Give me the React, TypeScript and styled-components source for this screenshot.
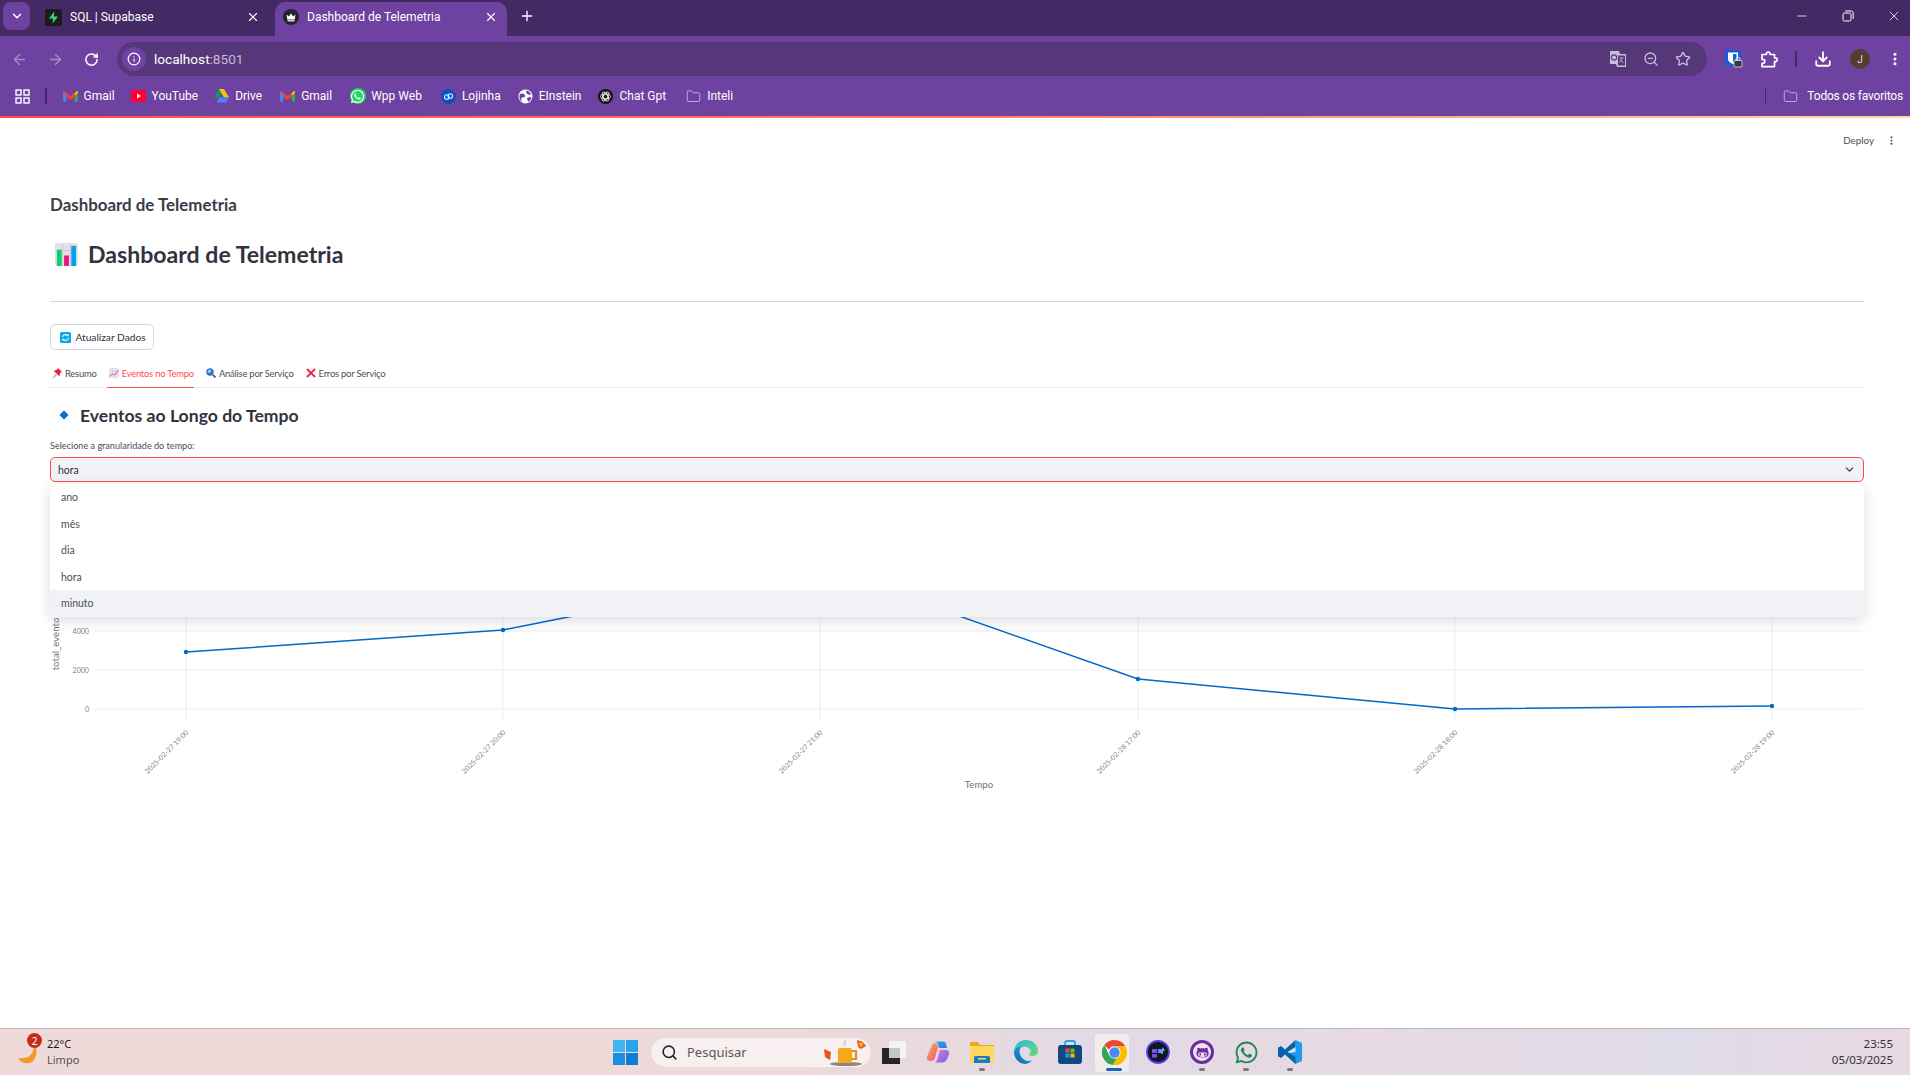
import React from "react";
import styled, { createGlobalStyle } from "styled-components";
import {
  ArrowLeft,
  ArrowRight,
  ChevronDown,
  Download,
  EllipsisVertical,
  Folder,
  Info,
  Minus,
  Plus,
  RotateCw,
  Search,
  Star,
  X,
  ZoomOut,
} from "lucide-react";
import { FaGithubAlt, FaWhatsapp } from "react-icons/fa";

const UI_FONT = `Roboto, "Noto Sans", sans-serif`;
const PAGE_FONT = `Lato, "Noto Sans", sans-serif`;
const SHELL_FONT = `"Noto Sans", "Open Sans", sans-serif`;

const GlobalStyle = createGlobalStyle`
  html, body {
    margin: 0;
    padding: 0;
    background: #ffffff;
    overflow: hidden;
  }
  * {
    box-sizing: border-box;
  }
`;

const Root = styled.div`
  width: 1910px;
  height: 1075px;
  display: flex;
  flex-direction: column;
  overflow: hidden;
  font-family: ${UI_FONT};
`;

/* ---------- browser chrome ---------- */

const TabStrip = styled.div`
  height: 36px;
  flex: none;
  display: flex;
  align-items: flex-end;
  background: #442a64;
  padding-left: 3px;
  position: relative;
`;

const TabSearch = styled.div`
  width: 27px;
  height: 28px;
  margin-bottom: 6px;
  border-radius: 8px;
  background: #6e42a0;
  color: #fff;
  display: flex;
  align-items: center;
  justify-content: center;
`;

const Tab = styled.div<{ $active?: boolean; $width: number }>`
  width: ${(p) => p.$width}px;
  height: 34px;
  display: flex;
  align-items: center;
  padding: 0 ${(p) => (p.$active ? 9 : 15)}px 4px 8px;
  gap: 8px;
  color: #fff;
  font-size: 12px;
  border-radius: 10px 10px 0 0;
  background: ${(p) => (p.$active ? "#6e42a0" : "transparent")};
`;

const FirstTabSpacer = styled.div`
  width: 7px;
`;

const TabTitle = styled.span`
  flex: 1;
  white-space: nowrap;
  overflow: hidden;
`;

const NewTab = styled.div`
  margin: 0 0 5px 12px;
  height: 30px;
  display: flex;
  align-items: center;
  color: #fff;
`;

const WindowControls = styled.div`
  margin: 0 -7px 0 auto;
  align-self: flex-start;
  height: 32px;
  display: flex;
  align-items: center;
  color: #fff;
`;

const WindowButton = styled.div`
  width: 46px;
  height: 32px;
  display: flex;
  align-items: center;
  justify-content: center;
`;

const Toolbar = styled.div`
  height: 44px;
  flex: none;
  background: #6e42a0;
  display: flex;
  align-items: flex-start;
  padding-top: 6px;
`;

const NavGroup = styled.div`
  width: 117px;
  height: 34px;
  display: flex;
  padding-left: 1px;
`;

const NavButton = styled.div<{ $dim?: boolean }>`
  width: 36px;
  height: 34px;
  display: flex;
  align-items: center;
  justify-content: center;
  color: ${(p) => (p.$dim ? "#a38dc1" : "#ffffff")};
`;

const Omnibox = styled.div`
  width: 1590px;
  height: 34px;
  border-radius: 17px;
  background: #56387a;
  display: flex;
  align-items: center;
  padding: 0 16px 0 5px;
`;

const InfoBadge = styled.div`
  width: 24px;
  height: 24px;
  border-radius: 50%;
  background: #6e42a0;
  color: #fff;
  display: flex;
  align-items: center;
  justify-content: center;
  margin-right: 8px;
`;

const Url = styled.span`
  font-size: 13.6px;
  color: #fff;
  flex: 1;
`;

const UrlPort = styled.span`
  color: #c6b8d8;
`;

const OmniIcons = styled.div`
  display: flex;
  align-items: center;
  gap: 16px;
  color: #c9bdd9;
`;

const ToolbarRight = styled.div`
  flex: 1;
  height: 34px;
  display: flex;
  align-items: center;
  padding-left: 18px;
  color: #fff;
`;

const PuzzleSlot = styled.div`
  width: 36px;
  height: 34px;
  margin-left: 8px;
  display: flex;
  align-items: center;
  justify-content: center;
`;

const ToolDivider = styled.div`
  width: 2px;
  height: 16px;
  margin: 0 17px 0 8px;
  background: #432a63;
`;

const Avatar = styled.div`
  width: 20px;
  height: 20px;
  margin: 0 17px 0 18px;
  border-radius: 50%;
  background: #573c33;
  color: #e8ddd8;
  font-size: 10px;
  display: flex;
  align-items: center;
  justify-content: center;
`;

const BookmarkBar = styled.div`
  height: 36px;
  flex: none;
  background: #6e42a0;
  display: flex;
  align-items: center;
  padding: 0 0 4px 15px;
  color: #fff;
  font-size: 12px;
`;

const BookmarkDivider = styled.div<{ $right?: boolean }>`
  width: 1.5px;
  height: 16px;
  background: #432a63;
  margin: ${(p) => (p.$right ? "0 17px 0 0" : "0 16px 0 15px")};
`;

const Bookmark = styled.div<{ $gap: number; $iconGap?: number }>`
  display: flex;
  align-items: center;
  gap: ${(p) => p.$iconGap ?? 6}px;
  margin-right: ${(p) => p.$gap}px;
  white-space: nowrap;
`;

const BookmarkIcon = styled.span`
  width: 15px;
  height: 16px;
  display: flex;
  align-items: center;
  justify-content: center;
  color: #c9bdd9;
`;

const WppBookmark = styled.span`
  width: 16px;
  height: 16px;
  flex: none;
  border-radius: 50%;
  background: #25d366;
  display: flex;
  align-items: center;
  justify-content: center;
`;

const BookmarkEnd = styled.div`
  margin-left: auto;
  display: flex;
  align-items: center;
  padding-right: 7px;
  letter-spacing: -0.2px;
`;

const AccentLine = styled.div`
  height: 2px;
  flex: none;
  background: linear-gradient(90deg, #ff4b4b 0%, #ff7a5f 50%, #ffd9a0 100%);
`;

/* ---------- streamlit page ---------- */

const Page = styled.main`
  flex: 1;
  min-height: 0;
  background: #fff;
  color: #31333f;
  font-family: ${PAGE_FONT};
  padding: 0 46px 0 50px;
  overflow: hidden;
`;

const Header = styled.div`
  height: 44px;
  margin-right: -46px;
  display: flex;
  align-items: center;
  justify-content: flex-end;
  padding-right: 13px;
  font-size: 9.8px;
  color: #4b4e5b;
  gap: 12px;
`;

const Subheading = styled.h3`
  margin: 28px 0 0;
  height: 30px;
  line-height: 30px;
  font-size: 16.9px;
  font-weight: 700;
  color: #3a3c48;
`;

const Title = styled.h1`
  margin: 14px 0 0;
  height: 40px;
  display: flex;
  align-items: center;
  gap: 10px;
  padding-left: 5px;
  font-size: 23.1px;
  font-weight: 700;
  color: #31333f;
`;

const Rule = styled.hr`
  margin: 27px 0 0;
  border: 0;
  height: 1px;
  background: #d6d7da;
`;

const RefreshButton = styled.button`
  margin-top: 22px;
  width: 104px;
  height: 26px;
  display: flex;
  align-items: center;
  justify-content: center;
  gap: 4px;
  padding: 0 0 0 2px;
  background: #fff;
  border: 1px solid #d5d6da;
  border-radius: 5px;
  font-family: inherit;
  font-size: 10.2px;
  color: #31333f;
`;

const Tabs = styled.div`
  margin-top: 13px;
  height: 25px;
  display: flex;
  gap: 10px;
  border-bottom: 1px solid #eceef1;
`;

const TabItem = styled.div<{ $active?: boolean }>`
  height: 25px;
  display: flex;
  align-items: flex-start;
  gap: 3px;
  padding: 5px 0 0 2px;
  font-size: 9.4px;
  letter-spacing: -0.2px;
  line-height: 12px;
  white-space: nowrap;
  color: ${(p) => (p.$active ? "#ff4b4b" : "#4b4e5b")};
  border-bottom: ${(p) => (p.$active ? "1px solid #ff4b4b" : "none")};
`;

const SectionTitle = styled.h2`
  margin: 15px 0 0;
  height: 24px;
  display: flex;
  align-items: center;
  gap: 11px;
  padding-left: 9px;
  font-size: 17.6px;
  font-weight: 700;
  color: #31333f;
`;

const FieldLabel = styled.label`
  display: block;
  margin-top: 12px;
  height: 14px;
  line-height: 14px;
  font-size: 9.1px;
  color: #4b4e5b;
`;

const SelectWrap = styled.div`
  position: relative;
  margin-top: 4px;
`;

const SelectBox = styled.div`
  height: 25px;
  display: flex;
  align-items: center;
  justify-content: space-between;
  padding: 0 7px 0 7px;
  background: #f0f2f6;
  border: 1px solid #ff4b4b;
  border-radius: 5px;
  font-size: 10.5px;
  color: #31333f;
`;

const Menu = styled.ul`
  position: absolute;
  top: 27px;
  left: 0;
  right: 0;
  margin: 0;
  padding: 0;
  list-style: none;
  background: #fff;
  border-radius: 6px;
  overflow: hidden;
  box-shadow: 0 4px 14px rgba(40, 45, 60, 0.16);
  z-index: 2;
`;

const MenuItem = styled.li<{ $hover?: boolean }>`
  height: 26.6px;
  line-height: 26.6px;
  padding-left: 11px;
  font-size: 10.5px;
  color: #4b4e5b;
  background: ${(p) => (p.$hover ? "#f0f2f6" : "#fff")};
`;

const ChartSvg = styled.svg`
  display: block;
  margin-top: 1px;
  width: 1813px;
  height: 320px;
`;

const TickText = styled.text`
  font-family: ${PAGE_FONT};
  font-size: 7.1px;
  fill: #7f8290;
`;

const AxisTitle = styled.text`
  font-family: ${PAGE_FONT};
  font-size: 9.6px;
  fill: #6f7385;
`;

/* ---------- taskbar ---------- */

const Taskbar = styled.footer`
  height: 47px;
  flex: none;
  display: flex;
  align-items: center;
  border-top: 1px solid #bdb7b7;
  background: linear-gradient(90deg, #eedbd9 0%, #ecd9d8 42%, #e2dae6 58%, #e7dae2 72%, #dfdbe8 88%, #e8d9e2 100%);
  color: #1d1d1d;
  font-family: ${SHELL_FONT};
`;

const Weather = styled.div`
  width: 613px;
  height: 46px;
  flex: none;
  display: flex;
  align-items: center;
  padding-left: 16px;
  gap: 4px;
  position: relative;
`;

const WeatherBadge = styled.span`
  position: absolute;
  left: 27px;
  top: 4px;
  width: 15px;
  height: 15px;
  border-radius: 50%;
  background: #c42b1c;
  color: #fff;
  font-size: 10px;
  display: flex;
  align-items: center;
  justify-content: center;
`;

const WeatherText = styled.div`
  display: flex;
  flex-direction: column;
  font-size: 11px;
  line-height: 16px;
  padding-left: 1px;
`;

const WeatherSub = styled.span`
  color: #565050;
`;

const StartLogo = styled.svg`
  width: 25px;
  height: 25px;
  flex: none;
`;

const SearchPill = styled.div`
  margin-left: 12px;
  width: 222px;
  height: 31px;
  border-radius: 16px;
  background: #f7eff0;
  border: 1px solid #e3dbdc;
  display: flex;
  align-items: center;
  padding-left: 10px;
  gap: 9px;
  font-size: 13px;
  color: #5d5757;
  position: relative;
`;

const SearchArt = styled.svg`
  position: absolute;
  right: 2px;
  top: -1px;
  width: 48px;
  height: 30px;
`;

const TrayIcons = styled.div`
  display: flex;
  align-items: center;
`;

const TrayItem = styled.div<{ $active?: boolean }>`
  width: 44px;
  height: 46px;
  display: flex;
  align-items: center;
  justify-content: center;
  position: relative;
  &::before {
    content: "";
    position: absolute;
    left: 3px;
    right: 7px;
    top: 5px;
    bottom: 3px;
    border-radius: 4px;
    background: ${(p) => (p.$active ? "#f4eceb" : "transparent")};
  }
  > * {
    position: relative;
  }
`;

const RunDot = styled.span<{ $active?: boolean }>`
  && {
    position: absolute;
  }
  bottom: 4px;
  left: 50%;
  transform: translateX(-50%);
  width: ${(p) => (p.$active ? "16px" : "6px")};
  height: 3px;
  border-radius: 2px;
  background: ${(p) => (p.$active ? "#0f6cbd" : "#7b7678")};
`;

const GithubRing = styled.span`
  width: 24px;
  height: 24px;
  border-radius: 50%;
  border: 3px solid #6a2d9f;
  background: #efe3ee;
  color: #6a2d9f;
  display: flex;
  align-items: center;
  justify-content: center;
`;

const Clock = styled.div`
  margin-left: auto;
  padding-right: 17px;
  text-align: right;
  font-size: 11.5px;
  line-height: 16px;
  color: #333;
`;

/* ---------- drawn icons ---------- */

const SupabaseIcon = () => (
  <svg width="17" height="17" viewBox="0 0 17 17">
    <rect width="17" height="17" rx="2" fill="#1c1c1c" />
    <path d="M9.4 2.5 4 9.6h4.2l-.6 5 5.4-7.2H8.8z" fill="#3ecf8e" />
  </svg>
);

const StreamlitIcon = () => (
  <svg width="16" height="16" viewBox="0 0 16 16">
    <circle cx="8" cy="8" r="8" fill="#24222b" />
    <path d="M3.5 5.5 5.8 7.4 8 4.4l2.2 3 2.3-1.9-.8 5H4.3z" fill="#fff" />
    <rect x="4.5" y="11.2" width="7" height="1.2" fill="#fff" />
  </svg>
);

const RestoreIcon = () => (
  <svg width="12" height="12" viewBox="0 0 12 12" fill="none" stroke="#fff" strokeWidth="1">
    <rect x="1" y="3" width="8" height="8" rx="1.5" />
    <path d="M3.2 1h6a2 2 0 0 1 2 2v6" />
  </svg>
);

const TranslateIcon = () => (
  <svg width="18" height="18" viewBox="0 0 18 18">
    <path d="M1 1h9l1 3h6v13H8l-1-3H1z" fill="#c9bdd9" />
    <rect x="8.5" y="5" width="8" height="11" fill="#56387a" stroke="#c9bdd9" />
    <circle cx="5" cy="7.5" r="2.6" fill="none" stroke="#56387a" strokeWidth="1.2" />
    <path d="M10.5 8h4M12.5 8c0 2-1 3.5-2 4.5M11.5 10c.6 1 1.6 2 3 2.5" fill="none" stroke="#c9bdd9" strokeWidth=".9" />
  </svg>
);

const BitwardenIcon = () => (
  <svg width="18" height="18" viewBox="0 0 18 18">
    <rect width="16" height="16" fill="#175ddc" />
    <path d="M3 2.5h10V9c0 2.5-2.5 4-5 5-2.5-1-5-2.5-5-5z" fill="#fff" />
    <path d="M8 4h3.5v5c0 1.5-1.8 2.600-3.5 3.300z" fill="#175ddc" />
    <rect x="9" y="10.5" width="8" height="6.5" rx="1" fill="#3a3a3a" stroke="#ddd" strokeWidth=".8" />
    <path d="M11 10.5V9.300a2 2 0 0 1 4 0v1.200" fill="none" stroke="#ddd" />
  </svg>
);

const PuzzleIcon = () => (
  <svg width="17" height="17" viewBox="0 0 17 17" fill="none" stroke="#fff" strokeWidth="1.7" strokeLinejoin="round">
    <path d="M1 3.5h4.300V3a1.900 1.900 0 0 1 3.800 0v.5h4.400v3.300h.7a1.900 1.900 0 0 1 0 3.800h-.7v5H1v-3.300h.8a2 2 0 0 0 0-4H1z" />
  </svg>
);

const GmailIcon = () => (
  <svg width="15" height="12" viewBox="0 0 15 12">
    <path d="M0 2.5 1 .8 7.5 6 14 .8l1 1.700V5L7.500 10 0 5z" fill="#ea4335" />
    <path d="M0 2v8.800c0 .5.400 1 1 1h2.300V4.500z" fill="#4285f4" />
    <path d="M15 2v8.800c0 .5-.4 1-1 1h-2.300V4.500z" fill="#34a853" />
    <path d="M11.700 3 15 .8V3l-3.300 2.700z" fill="#fbbc04" />
  </svg>
);

const YouTubeIcon = () => (
  <svg width="15" height="12" viewBox="0 0 15 12">
    <rect width="15" height="12" rx="3" fill="#ff0033" />
    <path d="M6 3.5v5L10 6z" fill="#fff" />
  </svg>
);

const DriveIcon = () => (
  <svg width="15" height="14" viewBox="0 0 15 14">
    <path d="M5 0h5L5 8.500H0z" fill="#0f9d58" />
    <path d="M5 0h5l5 8.500h-5z" fill="#ffc107" />
    <path d="M2.500 13.500 5 8.500h10l-2.500 5z" fill="#4285f4" />
  </svg>
);

const LojinhaIcon = () => (
  <svg width="15" height="15" viewBox="0 0 15 15">
    <circle cx="7.5" cy="7.5" r="7.5" fill="#0b4fc4" />
    <circle cx="5.8" cy="8" r="2.3" fill="none" stroke="#dfe9ff" strokeWidth="1.1" />
    <circle cx="9.3" cy="7" r="2.3" fill="none" stroke="#dfe9ff" strokeWidth="1.1" />
  </svg>
);

const EinsteinIcon = () => (
  <svg width="15" height="15" viewBox="0 0 15 15">
    <circle cx="7.5" cy="7.5" r="7" fill="#fff" />
    <path d="M2 5c2-1 4-.5 5 1s-1 3-2.500 2.500S3 10 4 13C1.500 11.500.8 8 2 5zM8.500 1.500c2 .5 4 2 4.500 4-1.500.5-3 .3-4-.8s-1-2-.5-3.200zM9.500 8.500c1.500-.5 3-.5 4 0-.3 2-1.500 3.500-3 4.300-1.200-1.500-1.800-3-1-4.300z" fill="#6e42a0" />
  </svg>
);

const ChatGptIcon = () => (
  <svg width="15" height="15" viewBox="0 0 15 15">
    <circle cx="7.5" cy="7.5" r="7.5" fill="#111" />
    <g fill="none" stroke="#e6e6e6" strokeWidth=".9">
      <circle cx="7.5" cy="7.5" r="2.2" />
      <ellipse cx="7.5" cy="7.5" rx="5" ry="2.6" />
      <ellipse cx="7.5" cy="7.5" rx="5" ry="2.6" transform="rotate(60 7.5 7.5)" />
      <ellipse cx="7.5" cy="7.5" rx="5" ry="2.6" transform="rotate(120 7.5 7.5)" />
    </g>
  </svg>
);

const PinEmoji = () => (
  <svg width="10" height="11" viewBox="0 0 10 11">
    <path d="M6 0l4 4-1.500.6L7.300 8.200 1.800 2.900 5.400 1.600z" fill="#e5243b" />
    <path d="M3.300 5.800 0 11l5-3.600z" fill="#b7b7b7" />
  </svg>
);

const ChartEmoji = ({ size }: { size: number }) => (
  <svg width={size} height={size} viewBox="0 0 24 24">
    <rect width="24" height="24" rx="2" fill="#e4dfe9" />
    <path d="M8 0v24M16 0v24M0 8h24M0 16h24" stroke="#cfc8d8" strokeWidth="1" />
    <rect x="2" y="7" width="5" height="17" fill="#0ccf6c" />
    <rect x="9.5" y="13" width="5" height="11" fill="#f0127e" />
    <rect x="17" y="3" width="5" height="21" fill="#00a2e8" />
  </svg>
);

const TrendEmoji = () => (
  <svg width="10" height="10" viewBox="0 0 10 10">
    <rect width="10" height="10" fill="#e9e4ee" />
    <path d="M3.300 0v10M6.600 0v10M0 3.300h10M0 6.600h10" stroke="#d2cbdc" strokeWidth=".5" />
    <path d="M.5 8.500 3.500 6l2 1L9.500 2" fill="none" stroke="#e55b7e" strokeWidth="1" />
  </svg>
);

const LensEmoji = () => (
  <svg width="10" height="10" viewBox="0 0 10 10">
    <circle cx="4" cy="4" r="3.7" fill="#2a74c9" />
    <circle cx="3.4" cy="3.3" r="1.7" fill="#9cc9f2" />
    <path d="M6.800 6.800 9.500 9.500" stroke="#4a4a5a" strokeWidth="1.6" />
  </svg>
);

const CrossEmoji = () => (
  <svg width="10" height="10" viewBox="0 0 10 10">
    <path d="M1 1l8 8M9 1 1 9" stroke="#f02849" strokeWidth="1.9" />
  </svg>
);

const RefreshEmoji = () => (
  <svg width="11" height="11" viewBox="0 0 11 11">
    <rect width="11" height="11" rx="1.5" fill="#0ea5e9" />
    <path d="M2.500 5a3 3 0 0 1 5.200-1.300M8.500 6a3 3 0 0 1-5.200 1.300" fill="none" stroke="#fff" strokeWidth="1.1" />
    <path d="M8.600 2v2.300H6.400M2.400 9V6.700h2.200" fill="#fff" />
  </svg>
);

const Diamond = () => (
  <svg width="10" height="10" viewBox="0 0 10 10">
    <path d="M5 .5 9.500 5 5 9.500.5 5z" fill="#0a6cc4" />
  </svg>
);

const WeatherIcon = () => (
  <svg width="26" height="26" viewBox="0 0 26 26">
    <path d="M18 4c.5 5-.5 9-3.500 12-2.800 2.700-7 3.500-12.500 3 2.500 4.500 7 6 11.500 5C20 22.500 23 12 18 4z" fill="#f09a24" />
  </svg>
);

const TerminalIcon = () => (
  <svg width="24" height="24" viewBox="0 0 24 24">
    <rect x="7" y="1" width="17" height="17" fill="#f6f3f3" />
    <rect x="0" y="8" width="18" height="16" fill="#262626" />
    <rect x="7" y="8" width="11" height="10" fill="#c7c5c5" />
  </svg>
);

const CopilotIcon = () => (
  <svg width="24" height="24" viewBox="0 0 24 24">
    <defs>
      <linearGradient id="copA" x1="0" y1="0" x2="1" y2="1">
        <stop offset="0" stopColor="#27b6e8" />
        <stop offset="1" stopColor="#3c6ee6" />
      </linearGradient>
      <linearGradient id="copB" x1="0" y1="0" x2="1" y2="1">
        <stop offset="0" stopColor="#f6b73c" />
        <stop offset="1" stopColor="#ee4f8f" />
      </linearGradient>
      <linearGradient id="copC" x1="0" y1="0" x2="1" y2="1">
        <stop offset="0" stopColor="#d777e0" />
        <stop offset="1" stopColor="#7f65e8" />
      </linearGradient>
    </defs>
    <path d="M8 1.500h9c1.800 0 2.500 1.200 3 2.500l1 4h-8l-1-3.500C11.500 2.500 10 1.500 8 1.500z" fill="url(#copA)" />
    <path d="M6 5c1-2 3.500-2.500 5-1l1 3-3 11c-.5 2-2 3-3.500 3H4C1.500 21 .5 19 1 16.500z" fill="url(#copB)" />
    <path d="M16 22.500H8c1.500 0 2.500-1 3-2.500l3-10h6c2.500 0 3.500 2 3 4.500L21.500 18c-1 3-3 4.500-5.500 4.500z" fill="url(#copC)" />
  </svg>
);

const ExplorerIcon = () => (
  <svg width="24" height="24" viewBox="0 0 24 24">
    <path d="M0 3a1 1 0 0 1 1-1h7l2 3h14v18H0z" fill="#e8a820" />
    <rect y="6" width="24" height="17" rx="1" fill="#ffd75e" />
    <path d="M4 23v-5.500A1.500 1.500 0 0 1 5.500 16h13a1.500 1.500 0 0 1 1.500 1.500V23z" fill="#1b79c4" />
    <rect x="8" y="18" width="8" height="1.5" fill="#ffd75e" />
  </svg>
);

const EdgeIcon = () => (
  <svg width="24" height="24" viewBox="0 0 24 24">
    <defs>
      <linearGradient id="edgeA" x1="0" y1="1" x2="1" y2="0">
        <stop offset="0" stopColor="#0a5fb4" />
        <stop offset="1" stopColor="#2fb7e8" />
      </linearGradient>
      <linearGradient id="edgeB" x1="0" y1="0" x2="1" y2="1">
        <stop offset="0" stopColor="#2ab8e0" />
        <stop offset="1" stopColor="#6fd96b" />
      </linearGradient>
    </defs>
    <path d="M12 0c6.600 0 12 4.800 12 11 0 3.500-2.800 5-5.500 5-2 0-3.500-.6-4-1.200 2-1 2.500-2.600 2-4C15.500 8 13 6.500 10 6.800 5.500 7.300 2 9 0 12 0 5 5.400 0 12 0z" fill="url(#edgeB)" />
    <path d="M0 12c1-4 5-6 8.500-5.500C6 7.500 5 10.500 6 14c1.300 5 6.300 8 12 6.500-2 2.200-4.500 3.500-7 3.500C5 24 0 18.500 0 12z" fill="url(#edgeA)" />
  </svg>
);

const StoreIcon = () => (
  <svg width="24" height="24" viewBox="0 0 24 24">
    <path d="M7 6V3a2 2 0 0 1 2-2h6a2 2 0 0 1 2 2v3" fill="none" stroke="#27a3e0" strokeWidth="1.8" />
    <rect y="5" width="24" height="19" rx="3" fill="#11487f" />
    <rect x="7.5" y="8.5" width="4" height="4" fill="#f25022" />
    <rect x="12.5" y="8.5" width="4" height="4" fill="#7fba00" />
    <rect x="7.5" y="13.5" width="4" height="4" fill="#00a4ef" />
    <rect x="12.5" y="13.5" width="4" height="4" fill="#ffb900" />
  </svg>
);

const ChromeIcon = () => (
  <svg width="25" height="25" viewBox="0 0 24 24">
    <circle cx="12" cy="12" r="12" fill="#fff" />
    <path d="M12 0a12 12 0 0 1 10.400 6H12a6 6 0 0 0-5.400 3.300L2.300 4.900A12 12 0 0 1 12 0z" fill="#e8453c" />
    <path d="M2.300 4.900 7.100 14.800A6 6 0 0 0 14.600 17.500L10.500 24A12 12 0 0 1 2.300 4.900z" fill="#34a853" />
    <path d="M22.400 6A12 12 0 0 1 10.500 24l4.900-7.600A6 6 0 0 0 16.800 8.300L12 6z" fill="#fbbc04" />
    <circle cx="12" cy="12" r="5" fill="#4a8af4" />
  </svg>
);

const DarkAppIcon = () => (
  <svg width="24" height="24" viewBox="0 0 24 24">
    <circle cx="12" cy="12" r="11" fill="#111524" stroke="#5b3fe0" strokeWidth="1.8" />
    <rect x="6" y="9" width="5" height="4" fill="#6d58e8" />
    <rect x="6" y="14" width="5" height="3.5" fill="#6d58e8" />
    <rect x="12" y="9" width="4" height="4" fill="#8a76f0" />
    <path d="M14 13l3-6 2 4h-2v3z" fill="#48b4f0" />
  </svg>
);

const VsCodeIcon = () => (
  <svg width="24" height="24" viewBox="0 0 24 24">
    <path d="M17.500 0 24 3v18l-6.500 3L7 13.500 17.500 12z" fill="#1f9cf0" />
    <path d="M17.500 0v7L9.500 12l8 5v7L7 14.500 3 18l-3-1.800V7.800L3 6l4 3.500z" fill="#0065a9" />
  </svg>
);

const CupIcon = () => (
  <SearchArt viewBox="0 0 48 30">
    <ellipse cx="25" cy="27" rx="16" ry="2" fill="#8f857c" />
    <rect x="17" y="11" width="14" height="15" rx="2" fill="#f3a91a" />
    <path d="M31 14h4v8h-4" fill="none" stroke="#e28f12" strokeWidth="2.2" />
    <path d="M23 3c2 1.500 0 3.500 1 6" fill="none" stroke="#d9d4d0" strokeWidth="2.5" />
    <path d="M3 12l7 3-1 8-5-3zM36 3l6 2 3 4-5 3-3-2z" fill="#e2551e" />
    <path d="M38 5l5 1-2 4-3-1z" fill="#f3a91a" />
  </SearchArt>
);

/* ---------- data ---------- */

const bookmarks: { name: string; icon: React.ReactNode; gap: number }[] = [
  { name: "Gmail", icon: <GmailIcon />, gap: 16 },
  { name: "YouTube", icon: <YouTubeIcon />, gap: 16 },
  { name: "Drive", icon: <DriveIcon />, gap: 18 },
  { name: "Gmail", icon: <GmailIcon />, gap: 18 },
  {
    name: "Wpp Web",
    icon: (
      <WppBookmark>
        <FaWhatsapp size={15} color="#fff" />
      </WppBookmark>
    ),
    gap: 19,
  },
  { name: "Lojinha", icon: <LojinhaIcon />, gap: 17 },
  { name: "EInstein", icon: <EinsteinIcon />, gap: 17 },
  { name: "Chat Gpt", icon: <ChatGptIcon />, gap: 20 },
  { name: "Inteli", icon: <Folder size={17} strokeWidth={1.4} />, gap: 0 },
];

const tabItems = [
  { label: "Resumo", icon: <PinEmoji /> },
  { label: "Eventos no Tempo", icon: <TrendEmoji />, active: true },
  { label: "Análise por Serviço", icon: <LensEmoji /> },
  { label: "Erros por Serviço", icon: <CrossEmoji /> },
];

const options = ["ano", "mês", "dia", "hora", "minuto"];

// chart coordinates are relative to the plot svg, which starts under the select
const points: [number, number][] = [
  [136, 169],
  [453, 147],
  [770, 84],
  [1088, 196],
  [1405, 226],
  [1722, 223],
];
const xLabels = [
  "2025-02-27 19:00",
  "2025-02-27 20:00",
  "2025-02-27 21:00",
  "2025-02-28 17:00",
  "2025-02-28 18:00",
  "2025-02-28 19:00",
];
const yTicks = [
  { label: "0", y: 226 },
  { label: "2000", y: 187 },
  { label: "4000", y: 148 },
  { label: "6000", y: 109 },
];

const Chart = () => (
  <ChartSvg viewBox="0 0 1813 320">
    {yTicks.map((t) => (
      <g key={t.label}>
        <line x1="45" x2="1813" y1={t.y} y2={t.y} stroke="#eef0f4" strokeWidth="1" />
        <TickText x="39" y={t.y + 3} textAnchor="end">
          {t.label}
        </TickText>
      </g>
    ))}
    {points.map(([x], i) => (
      <g key={xLabels[i]}>
        <line x1={x} x2={x} y1="40" y2="237" stroke="#eceef2" strokeWidth="1" />
        <TickText x={x + 3} y="250" textAnchor="end" transform={`rotate(-45 ${x + 3} 250)`}>
          {xLabels[i]}
        </TickText>
      </g>
    ))}
    <polyline
      points={points.map((p) => p.join(",")).join(" ")}
      fill="none"
      stroke="#0068c9"
      strokeWidth="1.5"
    />
    {points.map(([x, y]) => (
      <circle key={x} cx={x} cy={y} r="2.2" fill="#0068c9" />
    ))}
    <AxisTitle x="9" y="161" textAnchor="middle" transform="rotate(-90 9 161)">
      total_evento
    </AxisTitle>
    <AxisTitle x="929" y="305" textAnchor="middle">
      Tempo
    </AxisTitle>
  </ChartSvg>
);

export default function App() {
  return (
    <Root>
      <GlobalStyle />
      <TabStrip>
        <TabSearch>
          <ChevronDown size={14} strokeWidth={2.5} />
        </TabSearch>
        <FirstTabSpacer />
        <Tab $width={238}>
          <SupabaseIcon />
          <TabTitle>SQL | Supabase</TabTitle>
          <X size={14} strokeWidth={2} />
        </Tab>
        <Tab $active $width={232}>
          <StreamlitIcon />
          <TabTitle>Dashboard de Telemetria</TabTitle>
          <X size={14} strokeWidth={2} />
        </Tab>
        <NewTab>
          <Plus size={16} strokeWidth={2} />
        </NewTab>
        <WindowControls>
          <WindowButton>
            <Minus size={14} strokeWidth={1.3} />
          </WindowButton>
          <WindowButton>
            <RestoreIcon />
          </WindowButton>
          <WindowButton>
            <X size={16} strokeWidth={1.2} />
          </WindowButton>
        </WindowControls>
      </TabStrip>
      <Toolbar>
        <NavGroup>
          <NavButton $dim>
            <ArrowLeft size={17} />
          </NavButton>
          <NavButton $dim>
            <ArrowRight size={17} />
          </NavButton>
          <NavButton>
            <RotateCw size={15} strokeWidth={2.4} />
          </NavButton>
        </NavGroup>
        <Omnibox>
          <InfoBadge>
            <Info size={14} />
          </InfoBadge>
          <Url>
            localhost<UrlPort>:8501</UrlPort>
          </Url>
          <OmniIcons>
            <TranslateIcon />
            <ZoomOut size={16} />
            <Star size={16} />
          </OmniIcons>
        </Omnibox>
        <ToolbarRight>
          <BitwardenIcon />
          <PuzzleSlot>
            <PuzzleIcon />
          </PuzzleSlot>
          <ToolDivider />
          <Download size={18} strokeWidth={2.4} />
          <Avatar>J</Avatar>
          <EllipsisVertical size={16} strokeWidth={2.6} />
        </ToolbarRight>
      </Toolbar>
      <BookmarkBar>
        <svg width="15" height="15" viewBox="0 0 15 15" fill="none" stroke="#fff" strokeWidth="1.4">
          <rect x="1" y="1" width="5" height="5" />
          <rect x="9" y="1" width="5" height="5" />
          <rect x="1" y="9" width="5" height="5" />
          <rect x="9" y="9" width="5" height="5" />
        </svg>
        <BookmarkDivider />
        {bookmarks.map((b, i) => (
          <Bookmark key={`${b.name}-${i}`} $gap={b.gap}>
            <BookmarkIcon>{b.icon}</BookmarkIcon>
            {b.name}
          </Bookmark>
        ))}
        <BookmarkEnd>
          <BookmarkDivider $right />
          <Bookmark $gap={0} $iconGap={9}>
            <BookmarkIcon>
              <Folder size={17} strokeWidth={1.4} />
            </BookmarkIcon>
            Todos os favoritos
          </Bookmark>
        </BookmarkEnd>
      </BookmarkBar>
      <AccentLine />

      <Page>
        <Header>
          Deploy
          <EllipsisVertical size={11} strokeWidth={2.6} />
        </Header>
        <Subheading>Dashboard de Telemetria</Subheading>
        <Title>
          <ChartEmoji size={23} />
          Dashboard de Telemetria
        </Title>
        <Rule />
        <RefreshButton>
          <RefreshEmoji />
          Atualizar Dados
        </RefreshButton>
        <Tabs>
          {tabItems.map((t) => (
            <TabItem key={t.label} $active={t.active}>
              {t.icon}
              {t.label}
            </TabItem>
          ))}
        </Tabs>
        <SectionTitle>
          <Diamond />
          Eventos ao Longo do Tempo
        </SectionTitle>
        <FieldLabel>Selecione a granularidade do tempo:</FieldLabel>
        <SelectWrap>
          <SelectBox>
            hora
            <ChevronDown size={13} strokeWidth={2} />
          </SelectBox>
          <Menu>
            {options.map((o) => (
              <MenuItem key={o} $hover={o === "minuto"}>
                {o}
              </MenuItem>
            ))}
          </Menu>
        </SelectWrap>
        <Chart />
      </Page>

      <Taskbar>
        <Weather>
          <WeatherIcon />
          <WeatherBadge>2</WeatherBadge>
          <WeatherText>
            22°C
            <WeatherSub>Limpo</WeatherSub>
          </WeatherText>
        </Weather>
        <StartLogo viewBox="0 0 25 25">
          <rect width="12" height="12" fill="#3fb6ee" />
          <rect x="13" width="12" height="12" fill="#2aa3e8" />
          <rect y="13" width="12" height="12" fill="#1b8fe0" />
          <rect x="13" y="13" width="12" height="12" fill="#0f7dd8" />
        </StartLogo>
        <SearchPill>
          <Search size={17} strokeWidth={2.2} color="#222" />
          Pesquisar
          <CupIcon />
        </SearchPill>
        <TrayIcons>
          <TrayItem>
            <TerminalIcon />
          </TrayItem>
          <TrayItem>
            <CopilotIcon />
          </TrayItem>
          <TrayItem>
            <ExplorerIcon />
            <RunDot />
          </TrayItem>
          <TrayItem>
            <EdgeIcon />
          </TrayItem>
          <TrayItem>
            <StoreIcon />
          </TrayItem>
          <TrayItem $active>
            <ChromeIcon />
            <RunDot $active />
          </TrayItem>
          <TrayItem>
            <DarkAppIcon />
          </TrayItem>
          <TrayItem>
            <GithubRing>
              <FaGithubAlt size={13} />
            </GithubRing>
            <RunDot />
          </TrayItem>
          <TrayItem>
            <FaWhatsapp size={25} color="#1d8a4f" />
            <RunDot />
          </TrayItem>
          <TrayItem>
            <VsCodeIcon />
            <RunDot />
          </TrayItem>
        </TrayIcons>
        <Clock>
          23:55
          <br />
          05/03/2025
        </Clock>
      </Taskbar>
    </Root>
  );
}
